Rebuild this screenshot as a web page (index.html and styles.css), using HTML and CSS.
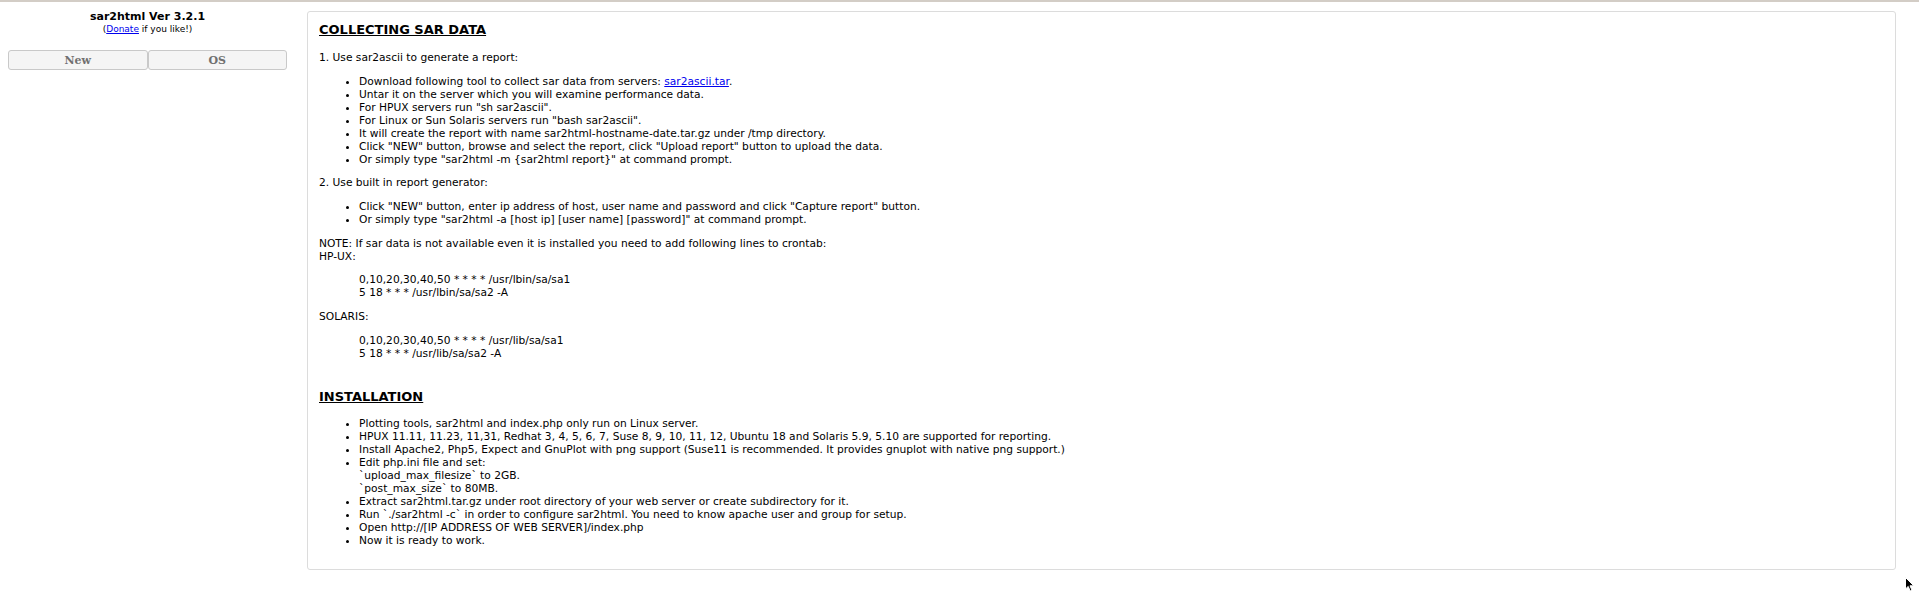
FILE: index.html
```html
<!DOCTYPE html>
<html>
<head>
<meta charset="utf-8">
<title>sar2html</title>
<link rel="stylesheet" href="styles.css">
</head>
<body>
<div class="topline"></div>
<div class="layout">
  <aside class="sidebar">
    <div class="title">sar2html Ver 3.2.1</div>
    <div class="donate">(<a href="#">Donate</a> if you like!)</div>
    <div class="buttons">
      <button class="btn">New</button>
      <button class="btn">OS</button>
    </div>
  </aside>
  <main class="content">
    <div class="panel">
      <h3 class="heading first">COLLECTING SAR DATA</h3>
      <p>1. Use sar2ascii to generate a report:</p>
      <ul>
        <li>Download following tool to collect sar data from servers: <a href="#">sar2ascii.tar</a>.</li>
        <li>Untar it on the server which you will examine performance data.</li>
        <li>For HPUX servers run "sh sar2ascii".</li>
        <li>For Linux or Sun Solaris servers run "bash sar2ascii".</li>
        <li>It will create the report with name sar2html-hostname-date.tar.gz under /tmp directory.</li>
        <li>Click "NEW" button, browse and select the report, click "Upload report" button to upload the data.</li>
        <li>Or simply type "sar2html -m {sar2html report}" at command prompt.</li>
      </ul>
      <p>2. Use built in report generator:</p>
      <ul>
        <li>Click "NEW" button, enter ip address of host, user name and password and click "Capture report" button.</li>
        <li>Or simply type "sar2html -a [host ip] [user name] [password]" at command prompt.</li>
      </ul>
      <p>NOTE: If sar data is not available even it is installed you need to add following lines to crontab:<br>HP-UX:</p>
      <blockquote>0,10,20,30,40,50 * * * * /usr/lbin/sa/sa1<br>5 18 * * * /usr/lbin/sa/sa2 -A</blockquote>
      <p>SOLARIS:</p>
      <blockquote>0,10,20,30,40,50 * * * * /usr/lib/sa/sa1<br>5 18 * * * /usr/lib/sa/sa2 -A</blockquote>
      <h3 class="heading second">INSTALLATION</h3>
      <ul>
        <li>Plotting tools, sar2html and index.php only run on Linux server.</li>
        <li>HPUX 11.11, 11.23, 11,31, Redhat 3, 4, 5, 6, 7, Suse 8, 9, 10, 11, 12, Ubuntu 18 and Solaris 5.9, 5.10 are supported for reporting.</li>
        <li>Install Apache2, Php5, Expect and GnuPlot with png support (Suse11 is recommended. It provides gnuplot with native png support.)</li>
        <li>Edit php.ini file and set:<br>`upload_max_filesize` to 2GB.<br>`post_max_size` to 80MB.</li>
        <li>Extract sar2html.tar.gz under root directory of your web server or create subdirectory for it.</li>
        <li>Run `./sar2html -c` in order to configure sar2html. You need to know apache user and group for setup.</li>
        <li>Open http://[IP ADDRESS OF WEB SERVER]/index.php</li>
        <li>Now it is ready to work.</li>
      </ul>
    </div>
  </main>
</div>
<svg class="cursor" width="12" height="16" viewBox="0 0 12 16"><path d="M0.5 0.5 L0.5 12 L3.2 9.4 L5.2 14 L7 13.2 L5 8.8 L8.8 8.8 Z" fill="#000" stroke="#fff" stroke-width="1"/></svg>
</body>
</html>
```
FILE: styles.css
```css
html, body {
  margin: 0;
  padding: 0;
  background: #fff;
}
body {
  font-family: "DejaVu Sans", Verdana, sans-serif;
  color: #000;
  position: relative;
  height: 592px;
  overflow: hidden;
}
a {
  color: #0000ee;
  text-decoration: underline;
}
.topline {
  height: 2px;
  background: #d3cdc6;
}
.layout {
  display: flex;
  align-items: flex-start;
  padding: 8px 23px 0 8px;
  gap: 20px;
}
.sidebar {
  flex: 0 0 279px;
  text-align: center;
}
.title {
  font-weight: bold;
  font-size: 11px;
}
.donate {
  font-size: 9px;
  margin-top: 1px;
}
.buttons {
  display: flex;
  margin-top: 16px;
}
.btn {
  flex: 1;
  height: 20px;
  margin: 0;
  padding: 0;
  background: #f5f5f5;
  border: 1px solid #c9c9c9;
  border-radius: 3px;
  color: #707070;
  font-family: "DejaVu Serif", serif;
  font-weight: bold;
  font-size: 11px;
}
.content {
  flex: 1;
  min-width: 0;
  padding-top: 1px;
}
.panel {
  border: 1px solid #dcdcdc;
  border-radius: 3px;
  padding: 0 11px 12px;
  font-size: 8pt;
}
.heading {
  font-size: 13px;
  font-weight: bold;
  text-decoration: underline;
  margin: 10px 0 14px;
}
.heading.second {
  margin-top: 29px;
  margin-bottom: 13px;
}
p {
  margin: 0;
}
.panel p, .panel ul, .panel blockquote {
  margin-top: 1em;
  margin-bottom: 1em;
}
.panel .heading + p,
.panel .heading + ul {
  margin-top: 0;
}
ul {
  padding-left: 40px;
}
blockquote {
  margin-left: 40px;
  margin-right: 40px;
}
.cursor {
  position: absolute;
  left: 1905px;
  top: 577px;
}
```
